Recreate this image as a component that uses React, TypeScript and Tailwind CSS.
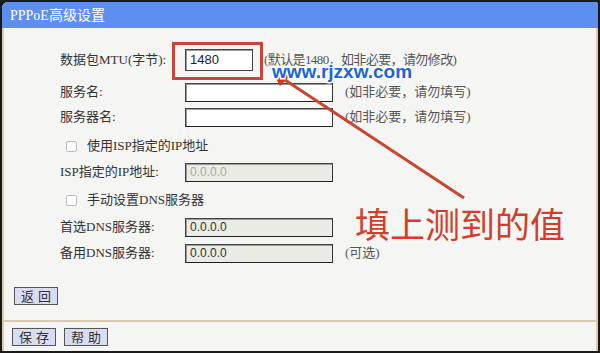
import React from "react";

const font = { fontFamily: '"Liberation Serif", "Noto Sans CJK SC", serif' };

function Row({ label, children, className = "" }: { label: string; children?: React.ReactNode; className?: string }) {
  return (
    <div className={"flex items-center h-[20px] " + className}>
      <div className="w-[125px] text-[13px] text-[#333]">{label}</div>
      {children}
    </div>
  );
}

function Input({ value = "", disabled = false, w = "w-[148px]", dim = false }: { value?: string; disabled?: boolean; w?: string; dim?: boolean }) {
  return (
    <div
      className={
        "h-[19px] border border-[#444] border-b-[#222] border-r-[#333] px-[4px] flex items-center text-[12px] " +
        w +
        (disabled ? " bg-[#ebebe6]" : " bg-white") +
        (dim ? " text-[#aaa]" : " text-[#333]")
      }
      style={{ fontFamily: '"Liberation Sans", Arial, sans-serif', boxShadow: "inset 1px 1px 0 #999" }}
    >
      {value}
    </div>
  );
}

function Btn({ text }: { text: string }) {
  return (
    <div className="h-[18px] px-[6px] flex items-center gap-[4px] bg-[#d9dcf2] border border-[#555] text-[13px] text-[#333]" style={{ fontFamily: '"Noto Sans CJK SC", sans-serif' }}>
      {text.split("").map((c, i) => (
        <span key={i}>{c}</span>
      ))}
    </div>
  );
}

function Check({ label }: { label: string }) {
  return (
    <div className="flex items-center h-[20px] pl-[6px]">
      <div className="w-[11px] h-[11px] border border-[#bbb] bg-white rounded-[2px]" />
      <div className="ml-[10px] text-[13px] text-[#333]">{label}</div>
    </div>
  );
}

export default function App() {
  return (
    <div className="relative w-[600px] h-[353px] bg-[#1a1a1a] p-[2px] overflow-hidden" style={font}>
      <div className="flex flex-col h-full bg-[#f5f5f3] rounded-tl-[6px] rounded-tr-[3px] overflow-hidden">
        <div className="h-[26px] bg-[#5d8ff0] flex items-center pl-[8px] text-white text-[14px]">PPPoE高级设置</div>
        <div className="flex-1 flex flex-col border-l-[2px] border-r-[2px] border-[#dcc9ad]">
          <div className="flex-1 pl-[56px] pt-[20px]">
            <Row label="数据包MTU(字节):" className="h-[24px]">
              <div className="h-[22px] w-[68px] border border-[#444] bg-white flex items-center px-[4px] text-[13px] text-[#222]" style={{ fontFamily: '"Liberation Sans", Arial, sans-serif', boxShadow: "inset 1px 1px 0 #999" }}>1480</div>
              <div className="ml-[11px] text-[13px] text-[#555] tracking-[-0.6px]">(默认是1480，如非必要，请勿修改)</div>
            </Row>
            <Row label="服务名:" className="mt-[10px]">
              <Input />
              <div className="ml-[12px] text-[13px] text-[#555]">(如非必要，请勿填写)</div>
            </Row>
            <Row label="服务器名:" className="mt-[5px]">
              <Input />
              <div className="ml-[12px] text-[13px] text-[#555]">(如非必要，请勿填写)</div>
            </Row>
            <div className="mt-[9px]"><Check label="使用ISP指定的IP地址" /></div>
            <Row label="ISP指定的IP地址:" className="mt-[6px]">
              <Input value="0.0.0.0" disabled dim />
            </Row>
            <div className="mt-[8px]"><Check label="手动设置DNS服务器" /></div>
            <Row label="首选DNS服务器:" className="mt-[7px]">
              <Input value="0.0.0.0" disabled />
            </Row>
            <Row label="备用DNS服务器:" className="mt-[6px]">
              <Input value="0.0.0.0" disabled />
              <div className="ml-[12px] text-[13px] text-[#555]">(可选)</div>
            </Row>
          </div>
          <div className="pl-[10px] pb-[12px]">
            <div className="inline-flex"><Btn text="返回" /></div>
          </div>
          <div className="h-[2px] bg-[#dcc9ad]" />
          <div className="h-[29px] flex items-center gap-[8px] pl-[8px]">
            <Btn text="保存" />
            <Btn text="帮助" />
          </div>
        </div>
      </div>

      {/* annotations */}
      <div className="absolute left-[172px] top-[42px] w-[91px] h-[38px] border-[3px] border-[#c9443a]" />
      <svg className="absolute left-0 top-0" width="600" height="353">
        <line x1="464" y1="198" x2="282" y2="78" stroke="#c8462f" strokeWidth="3" />
        <polygon points="270,68 292,74 280,86" fill="#d8321f" />
      </svg>
      <div className="absolute left-[272px] top-[58px] text-[19px] font-bold text-[#1c64d8] [-webkit-text-stroke:3px_white] [paint-order:stroke_fill]" style={{ fontFamily: '"Liberation Sans", Arial, sans-serif' }}>www.rjzxw.com</div>
      <div className="absolute left-[355px] top-[205px] text-[35px] text-[#cf3f2c] leading-none" style={{ fontFamily: '"Noto Sans CJK SC", sans-serif' }}>填上测到的值</div>
    </div>
  );
}
